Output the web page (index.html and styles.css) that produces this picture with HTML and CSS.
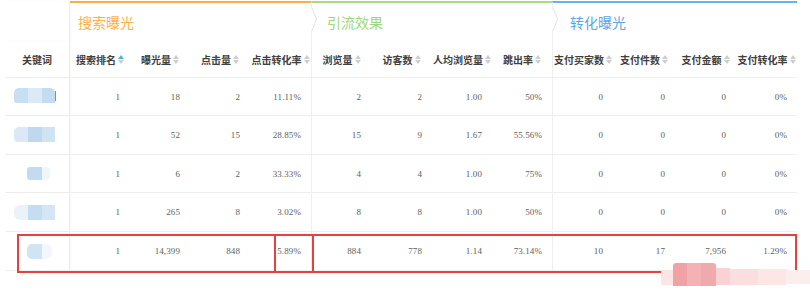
FILE: index.html
```html
<!DOCTYPE html>
<html lang="zh-CN">
<head>
<meta charset="utf-8">
<title>关键词效果</title>
<link rel="stylesheet" href="styles.css">
</head>
<body>
<div class="page">
  <div class="grid">
    <div class="kw blank"></div>
    <div class="grp g1"><span>搜索曝光</span></div>
    <div class="grp g2 gs"><svg class="chev" width="7" height="38" viewBox="0 0 7 38"><polygon points="0,5 5.5,16 0,28" fill="#fff"/><polyline points="1,5 5.5,16 1,28" fill="none" stroke="#e4e4e4" stroke-width="1"/></svg><span>引流效果</span></div>
    <div class="grp g3 gs"><svg class="chev" width="7" height="38" viewBox="0 0 7 38"><polygon points="0,5 5.5,16 0,28" fill="#fff"/><polyline points="1,5 5.5,16 1,28" fill="none" stroke="#e4e4e4" stroke-width="1"/></svg><span>转化曝光</span></div>

    <div class="c kw h">关键词</div>
    <div class="c h">搜索排名<i class="sort on"></i></div>
    <div class="c h">曝光量<i class="sort"></i></div>
    <div class="c h">点击量<i class="sort"></i></div>
    <div class="c h">点击转化率<i class="sort"></i></div>
    <div class="c h gs">浏览量<i class="sort"></i></div>
    <div class="c h">访客数<i class="sort"></i></div>
    <div class="c h">人均浏览量<i class="sort"></i></div>
    <div class="c h">跳出率<i class="sort"></i></div>
    <div class="c h gs">支付买家数<i class="sort"></i></div>
    <div class="c h">支付件数<i class="sort"></i></div>
    <div class="c h">支付金额<i class="sort"></i></div>
    <div class="c h">支付转化率<i class="sort"></i></div>

    <div class="c kw"><div class="blob b1"><span class="s1"></span><span class="s2"></span><span class="s3"></span><span class="dot"></span></div></div>
    <div class="c n">1</div><div class="c n">18</div><div class="c n">2</div><div class="c n">11.11%</div>
    <div class="c n gs">2</div><div class="c n">2</div><div class="c n">1.00</div><div class="c n">50%</div>
    <div class="c n gs">0</div><div class="c n">0</div><div class="c n">0</div><div class="c n">0%</div>

    <div class="c kw"><div class="blob b2"><span class="s1"></span><span class="s2"></span><span class="s3"></span></div></div>
    <div class="c n">1</div><div class="c n">52</div><div class="c n">15</div><div class="c n">28.85%</div>
    <div class="c n gs">15</div><div class="c n">9</div><div class="c n">1.67</div><div class="c n">55.56%</div>
    <div class="c n gs">0</div><div class="c n">0</div><div class="c n">0</div><div class="c n">0%</div>

    <div class="c kw"><div class="blob b3 short"><span class="s1"></span><span class="s2"></span></div></div>
    <div class="c n">1</div><div class="c n">6</div><div class="c n">2</div><div class="c n">33.33%</div>
    <div class="c n gs">4</div><div class="c n">4</div><div class="c n">1.00</div><div class="c n">75%</div>
    <div class="c n gs">0</div><div class="c n">0</div><div class="c n">0</div><div class="c n">0%</div>

    <div class="c kw"><div class="blob b4"><span class="s1"></span><span class="s2"></span><span class="s3"></span></div></div>
    <div class="c n">1</div><div class="c n">265</div><div class="c n">8</div><div class="c n">3.02%</div>
    <div class="c n gs">8</div><div class="c n">8</div><div class="c n">1.00</div><div class="c n">50%</div>
    <div class="c n gs">0</div><div class="c n">0</div><div class="c n">0</div><div class="c n">0%</div>

    <div class="c kw"><div class="blob b5 short"><span class="s1"></span><span class="s2"></span></div></div>
    <div class="c n">1</div><div class="c n">14,399</div><div class="c n">848</div><div class="c n">5.89%</div>
    <div class="c n gs">884</div><div class="c n">778</div><div class="c n">1.14</div><div class="c n">73.14%</div>
    <div class="c n gs">10</div><div class="c n">17</div><div class="c n">7,956</div><div class="c n">1.29%</div>
  </div>

  <div class="mark"><div class="m1"></div><div class="m2"></div><div class="m3"></div></div>

  <div class="wm">
    <span class="w0"></span><span class="w1"></span><span class="w2"></span><span class="w3"></span><span class="w4"></span><span class="w5"></span><span class="w6"></span><span class="w7"></span>
  </div>
</div>
</body>
</html>
```

FILE: styles.css
```css
body {
  margin: 0;
  background: #fff;
}

.page {
  position: relative;
  width: 810px;
  height: 297px;
  overflow: hidden;
  font-family: "Noto Sans CJK SC", "Liberation Sans", sans-serif;
}

.grid {
  display: grid;
  grid-template-columns: 65px 60px 60px 60px 61px 60px 61px 60px 60px 61px 62px 61px 61px;
  grid-template-rows: 40px 37px 38px 39px 38px 39px 39px;
  width: 792px;
  margin: 1px 0 0 5px;
}

.grid > div {
  box-sizing: border-box;
}

.c {
  border-bottom: 1px solid #efefef;
  display: flex;
  align-items: center;
}

.kw {
  border-right: 1px solid #ececec;
  box-shadow: 1px 0 2px rgba(0, 0, 0, 0.03);
}

.gs {
  border-left: 1px solid #efefef;
}

/* group title row */
.grp {
  grid-column: span 4;
  position: relative;
  display: flex;
  align-items: center;
  border-top: 2px solid;
  font-size: 14px;
  font-weight: 400;
}

.g1 {
  border-top-color: #fbb13c;
  color: #ffae4d;
  padding-left: 8px;
}

.g2 {
  border-top-color: #a9dc82;
  color: #9fd676;
  padding-left: 15px;
}

.g3 {
  border-top-color: #68b1ec;
  color: #5aa5e6;
  padding-left: 17px;
}

.chev {
  position: absolute;
  left: -1px;
  top: 0;
}

/* column headers */
.h {
  justify-content: center;
  font-size: 10px;
  font-weight: 700;
  color: #404040;
  white-space: nowrap;
}

.sort {
  display: inline-block;
  position: relative;
  width: 6px;
  height: 9px;
  margin-left: 2px;
}

.sort::before,
.sort::after {
  content: "";
  position: absolute;
  left: 0;
  border-left: 3px solid transparent;
  border-right: 3px solid transparent;
}

.sort::before {
  top: 0;
  border-bottom: 4px solid #cdcdcd;
}

.sort::after {
  top: 5px;
  border-top: 4px solid #cdcdcd;
}

.sort.on::before {
  border-bottom-color: #4db7c6;
}

/* numbers */
.n {
  justify-content: flex-end;
  padding-right: 10px;
  font-family: "Liberation Serif", serif;
  font-size: 9px;
  letter-spacing: 0.1px;
  color: #5e5e5e;
}

/* blurred keyword blobs */
.blob {
  display: flex;
  margin-left: 9px;
  height: 15px;
  position: relative;
}

.blob span {
  display: block;
  height: 100%;
  width: 14px;
}

.blob.short {
  margin-left: 22px;
}

.b1 { margin-top: -3px; }
.b1 .s1 { background: #c6dff2; border-radius: 5px 0 0 3px; }
.b1 .s2 { background: #dbeaf6; }
.b1 .s3 { background: #c4dcf1; width: 13px; border-radius: 0 5px 0 0; }
.b1 .dot { width: 1px; height: 10px; margin-top: 3px; background: #5b9ad2; }

.b2 { margin-top: -2px; }
.b2 .s1 { background: #dbe9f6; border-radius: 5px 0 0 4px; }
.b2 .s2 { background: #bed8ef; }
.b2 .s3 { background: #d0e3f3; width: 13px; }

.b3 { height: 13px; }
.b3 .s1 { background: #c2dbf1; width: 15px; border-radius: 3px 0 0 3px; }
.b3 .s2 { background: #eef5fb; width: 8px; border-radius: 0 4px 4px 0; }

.b4 { margin-top: 0; }
.b4 .s1 { background: #ebf3fa; border-radius: 6px 0 0 6px; }
.b4 .s2 { background: #c4ddf1; }
.b4 .s3 { background: #d4e6f5; width: 13px; }

.b5 .s1 { background: #d0e4f4; width: 15px; border-radius: 5px 0 0 5px; }
.b5 .s2 { background: #f1f7fc; width: 10px; border-radius: 0 6px 6px 0; }

/* red annotation box */
.mark {
  position: absolute;
  left: 17px;
  top: 234px;
  width: 780px;
  height: 39px;
  box-sizing: border-box;
  border: 2px solid #e8403f;
  display: flex;
}

.m1 {
  width: 255px;
}

.m2 {
  width: 36px;
  border-left: 2px solid #e8403f;
  border-right: 2px solid #e8403f;
}

.m3 {
  flex: 1;
}

/* pink watermark */
.wm {
  position: absolute;
  left: 661px;
  top: 263px;
  display: flex;
  align-items: flex-start;
}

.wm span {
  display: block;
}

.w0 { width: 12px; height: 15px; margin-top: 7px; background: #fde5e5; }
.w1 { width: 14px; height: 23px; background: #f1a2a5; border-radius: 3px 0 0 0; }
.w2 { width: 14px; height: 23px; background: #f4b2b4; }
.w3 { width: 15px; height: 23px; background: #f0a9ac; border-radius: 0 3px 0 0; }
.w4 { width: 14px; height: 17px; margin-top: 5px; background: #f9d3d4; }
.w5 { width: 28px; height: 16px; margin-top: 6px; background: #fbdfe0; }
.w6 { width: 28px; height: 16px; margin-top: 6px; background: #fce6e6; }
.w7 { width: 24px; height: 14px; margin-top: 7px; background: #fdeeee; }
```
